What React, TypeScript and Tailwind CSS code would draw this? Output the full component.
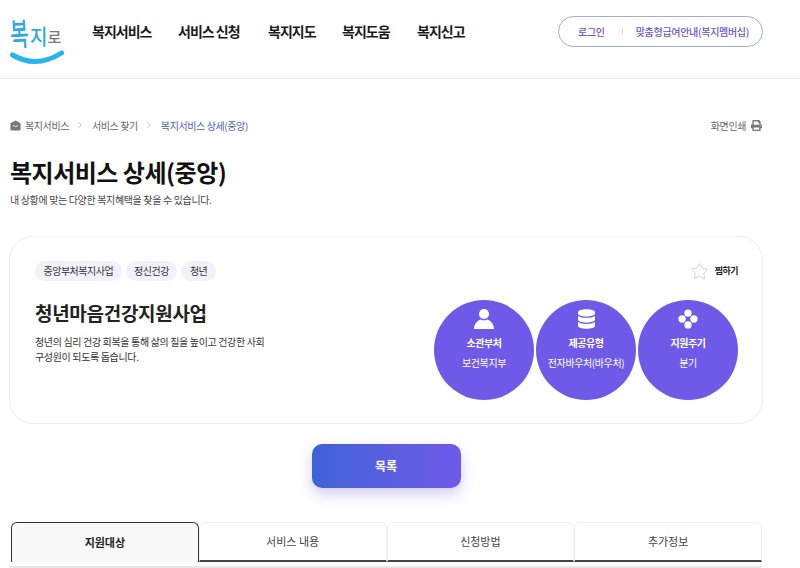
import { FaDatabase, FaPrint } from 'react-icons/fa'
import { ChevronRight, Star } from 'lucide-react'

const fontStack = "font-['Noto_Sans_CJK_KR','Noto_Sans',sans-serif]"

const navItems = [
  { label: '복지서비스', className: 'w-[86px]' },
  { label: '서비스 신청', className: 'w-[90px]' },
  { label: '복지지도', className: 'w-[74px]' },
  { label: '복지도움', className: 'w-[75px]' },
  { label: '복지신고', className: 'w-[60px]' },
]

const tags = ['중앙부처복지사업', '정신건강', '청년']

const UserIcon = () => (
  <svg viewBox="0 0 24 24" className="w-[22px] h-[22px] fill-white">
    <circle cx="12" cy="6.5" r="5.5" />
    <path d="M8.5 12.5 C4.5 14 1.5 17 1 23 H23 C22.5 17 19.5 14 15.5 12.5 C13.5 13.8 10.5 13.8 8.5 12.5 Z" />
  </svg>
)

const DotsIcon = () => (
  <svg viewBox="0 0 22 22" className="w-[20px] h-[20px] fill-white">
    <circle cx="11" cy="4.5" r="4" />
    <circle cx="4.5" cy="11" r="4" />
    <circle cx="17.5" cy="11" r="4" />
    <circle cx="11" cy="17.5" r="4" />
  </svg>
)

const infoCircles = [
  { icon: <UserIcon />, title: '소관부처', value: '보건복지부' },
  { icon: <FaDatabase className="w-[17px] h-[22px] text-white" />, title: '제공유형', value: '전자바우처(바우처)' },
  { icon: <DotsIcon />, title: '지원주기', value: '분기' },
]

const tabs = ['지원대상', '서비스 내용', '신청방법', '추가정보']

const Logo = () => (
  <div className="relative w-[56px] h-[62px] shrink-0">
    <div className="flex items-start leading-none font-medium">
      <span className="text-[#2fa9dc] text-[20px] mt-[23px] ml-[1px] scale-y-[1.6] -rotate-3">복</span>
      <span className="text-[#2fa9dc] text-[19px] mt-[25px] ml-[1.5px] scale-y-110">지</span>
      <span className="text-[#77787b] text-[15px] mt-[29px]">로</span>
    </div>
    <svg viewBox="0 0 56 18" className="absolute left-0 top-[50px] w-[56px] h-[18px]">
      <path d="M3.5 5 Q27 19 52.5 3" fill="none" stroke="#27b5ea" strokeWidth="5" strokeLinecap="round" />
    </svg>
  </div>
)

const HomeIcon = () => (
  <svg viewBox="0 0 12 12" className="w-[11px] h-[11px]">
    <path d="M6 0.5 L11.5 3.6 V10 A1.5 1.5 0 0 1 10 11.5 H2 A1.5 1.5 0 0 1 0.5 10 V3.6 Z" fill="#77777c" />
    <path d="M3.6 6 C4.6 7.6 7.4 7.6 8.4 6" fill="none" stroke="#fff" strokeWidth="1" strokeLinecap="round" />
  </svg>
)

export default function App() {
  return (
    <div className={`h-[568px] w-[800px] overflow-hidden bg-white text-[#222] ${fontStack}`}>
      <header className="h-[79px] border-b border-[#ebebeb] flex items-center pl-[9px] pr-[37px] pb-[16px]">
        <Logo />
        <nav className="flex ml-[27px] text-[14px] font-bold text-[#1a1a1a] tracking-[-1px]">
          {navItems.map(item => (
            <a key={item.label} className={`${item.className} whitespace-nowrap`}>{item.label}</a>
          ))}
        </nav>
        <div className="ml-auto w-[205px] h-[31px] rounded-full border border-[#a6aed0] flex items-center text-[10px] font-medium text-[#6a58c9] whitespace-nowrap tracking-[-0.3px]">
          <span className="ml-[19px]">로그인</span>
          <span className="ml-[17px] w-px h-[6px] bg-[#d8d8d8]" />
          <span className="ml-[13px]">맞춤형급여안내(복지멤버십)</span>
        </div>
      </header>

      <main className="px-[9px]">
        <div className="flex items-center h-[14px] mt-[39px] ml-px pr-[29px] text-[10px] text-[#666] whitespace-nowrap tracking-[-0.4px]">
          <HomeIcon />
          <span className="ml-[4px]">복지서비스</span>
          <ChevronRight className="w-[10px] h-[10px] ml-[6px] mr-[7px] text-[#b5b5b5]" />
          <span>서비스 찾기</span>
          <ChevronRight className="w-[10px] h-[10px] mx-[6.5px] text-[#b5b5b5]" />
          <span className="text-[#4f62b5]">복지서비스 상세(중앙)</span>
          <span className="ml-auto">화면인쇄</span>
          <FaPrint className="w-[11px] h-[11px] ml-[5px] text-[#77777c]" />
        </div>

        <h1 className="mt-[23px] ml-px text-[24px] leading-[34px] font-bold text-[#111] tracking-[-0.5px]">복지서비스 상세(중앙)</h1>
        <p className="mt-[4px] ml-px text-[10px] leading-[14px] text-[#444] tracking-[-0.35px]">내 상황에 맞는 다양한 복지혜택을 찾을 수 있습니다.</p>

        <section className="mt-[29px] w-[754px] h-[188px] rounded-[24px] border border-[#eeeeee] pl-[25px] pr-[24px] pt-[24px] relative">
          <div className="flex justify-between items-center">
            <div className="flex gap-[4px]">
              {tags.map(tag => (
                <span key={tag} className="h-[20px] px-[8.5px] rounded-full bg-[#f2f1f9] text-[10px] leading-[20px] text-[#333] tracking-[-0.5px]">{tag}</span>
              ))}
            </div>
            <div className="flex items-center gap-[6px]">
              <Star className="w-[19px] h-[19px] text-[#c9c9c9]" strokeWidth={1} />
              <span className="text-[9px] font-bold text-[#222] tracking-[-0.5px]">찜하기</span>
            </div>
          </div>

          <div className="flex justify-between mt-[19px]">
            <div>
              <h2 className="text-[19px] leading-[26px] font-bold text-[#222] tracking-[-0.3px]">청년마음건강지원사업</h2>
              <p className="mt-[9px] w-[240px] text-[10px] leading-[14.5px] text-[#333] tracking-[-0.35px]">청년의 심리 건강 회복을 통해 삶의 질을 높이고 건강한 사회 구성원이 되도록 돕습니다.</p>
            </div>
            <div className="flex gap-[2px]">
              {infoCircles.map(c => (
                <div key={c.title} className="w-[100px] h-[100px] rounded-full bg-[#6f5ae8] flex flex-col items-center pt-[8px] text-white tracking-[-0.4px]">
                  <div className="h-[22px] flex items-center justify-center">{c.icon}</div>
                  <strong className="mt-[6px] text-[10px] leading-[14px] font-bold">{c.title}</strong>
                  <span className="mt-[6px] text-[10px] leading-[14px] whitespace-nowrap">{c.value}</span>
                </div>
              ))}
            </div>
          </div>
        </section>

        <div className="flex justify-center w-[754px] mt-[20px]">
          <button className="w-[149px] h-[44px] rounded-[10px] bg-gradient-to-r from-[#3f62d6] to-[#6f5ae8] text-white text-[12px] font-bold shadow-[0_6px_14px_rgba(95,90,220,0.3)]">목록</button>
        </div>

        <div className="flex mt-[34px] ml-[2px] w-[751px] h-[40px]">
          {tabs.map((tab, i) => (
            <div
              key={tab}
              className={i === 0
                ? 'flex-1 rounded-t-[6px] border border-b-0 border-[#333] bg-[#f8f8f8] flex items-center justify-center text-[11px] font-bold text-[#222]'
                : 'flex-1 rounded-t-[6px] border border-[#f0f0f0] border-b-2 border-b-[#444] flex items-center justify-center text-[11px] text-[#444]'}
            >
              {tab}
            </div>
          ))}
        </div>
        <div className="mt-[4px] ml-[1px] h-[2px] w-[752px] bg-[#e6e6e6]" />
      </main>
    </div>
  )
}
